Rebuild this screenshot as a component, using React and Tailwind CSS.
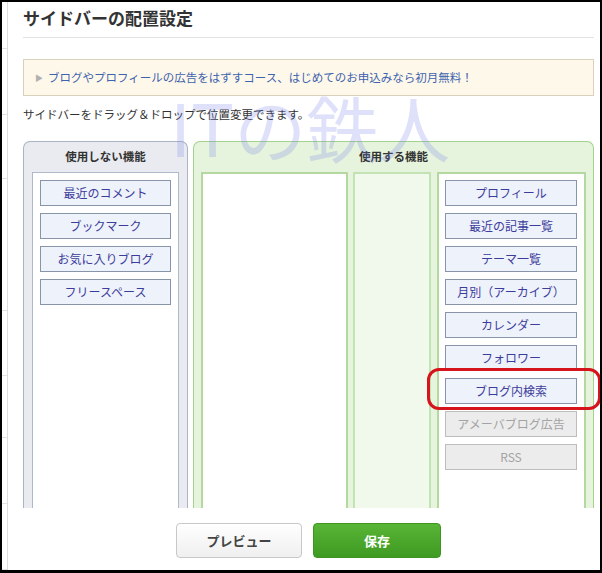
import React from "react";

const JP = { fontFamily: '"Noto Sans CJK JP", "Noto Sans", sans-serif' };

function Item({ label, disabled }) {
  return (
    <div
      className={`h-[26px] flex items-center justify-center border text-[12px] ${
        disabled
          ? "bg-[#ececec] border-[#bdbdbd] text-[#a3a3a3]"
          : "bg-[#eef2fa] border-[#8894a8] text-[#3c3c9c]"
      }`}
    >
      {label}
    </div>
  );
}

function App() {
  const unused = ["最近のコメント", "ブックマーク", "お気に入りブログ", "フリースペース"];
  const used = [
    "プロフィール",
    "最近の記事一覧",
    "テーマ一覧",
    "月別（アーカイブ）",
    "カレンダー",
    "フォロワー",
    "ブログ内検索",
  ];
  const stripLines = [53, 73, 72, 148, 72, 69, 74, 74];

  return (
    <div
      className="relative w-[602px] h-[573px] bg-white border-t-2 border-x-2 border-b-[3px] border-black flex overflow-hidden"
      style={JP}
    >
      {/* page behind the modal */}
      <div className="w-[6px] shrink-0 border-r border-[#dedede] flex flex-col">
        {stripLines.map((h, i) => (
          <div key={i} className="border-b border-[#e2e2e2]" style={{ height: h }} />
        ))}
      </div>

      {/* modal */}
      <div className="flex-1 pl-[15px] pr-[6px] flex flex-col">
        <div className="pt-[4px] pb-[7px] leading-[24px] text-[17px] font-bold text-[#333] border-b border-[#e3e3e3]">
          サイドバーの配置設定
        </div>

        <div className="mt-[21px] h-[37px] flex items-center pl-[11px] bg-[#fdf8ea] border border-[#d9d1bc] text-[11.5px] text-[#3e62ad]">
          <span className="text-[8px] text-[#b0b0b0] mr-[5px]">▶</span>
          ブログやプロフィールの広告をはずすコース、はじめてのお申込みなら初月無料！
        </div>

        <div className="mt-[9px] leading-[18px] text-[11.5px] text-[#333]">
          サイドバーをドラッグ＆ドロップで位置変更できます。
        </div>

        <div className="mt-[18px] h-[367px] flex gap-[5px] overflow-hidden">
          {/* unused */}
          <div className="w-[165px] flex flex-col bg-[#e9ebf0] border border-b-0 border-[#aab4c4] rounded-t-[7px] px-[8px]">
            <div className="h-[30px] flex items-center justify-center text-[11.5px] font-bold text-[#333]">
              使用しない機能
            </div>
            <div className="flex-1 bg-white border border-b-0 border-[#aebacb] px-[7px] pt-[7px] flex flex-col gap-[7px]">
              {unused.map((l) => (
                <Item key={l} label={l} />
              ))}
            </div>
          </div>

          {/* used */}
          <div className="flex-1 flex flex-col bg-[#e6f4de] border border-b-0 border-[#a4d18e] rounded-t-[7px] px-[7px]">
            <div className="h-[30px] flex items-center justify-center text-[11.5px] font-bold text-[#333]">
              使用する機能
            </div>
            <div className="flex-1 flex">
              <div className="w-[147px] bg-white border-2 border-b-0 border-[#b3d9a1]" />
              <div className="w-[78px] ml-[5px] bg-[#f1f9ed] border-2 border-b-0 border-[#c4e3b5]" />
              <div className="flex-1 ml-[6px] bg-white border-2 border-b-0 border-[#b3d9a1] pl-[6px] pr-[7px] pt-[6px] flex flex-col gap-[7px]">
                {used.map((l) => (
                  <Item key={l} label={l} />
                ))}
                <Item label="アメーバブログ広告" disabled />
                <Item label="RSS" disabled />
              </div>
            </div>
          </div>
        </div>

        <div className="mt-[15px] flex justify-center gap-[11px]">
          <button className="w-[126px] h-[35px] rounded-[4px] border border-[#c8c8c8] bg-gradient-to-b from-white to-[#efefef] text-[13px] font-bold text-[#444]">
            プレビュー
          </button>
          <button className="w-[128px] h-[35px] rounded-[4px] border border-[#3d9421] bg-gradient-to-b from-[#58b536] to-[#3f9a22] text-[13px] font-bold text-white">
            保存
          </button>
        </div>
      </div>

      {/* watermark */}
      <div className="absolute left-[168px] top-[74px] text-[72px] leading-[100px] text-[rgba(118,130,232,0.24)] pointer-events-none select-none">
        ITの鉄人
      </div>

      {/* red highlight */}
      <div className="absolute left-[425px] top-[366px] w-[174px] h-[42px] border-[3px] border-[#d6141c] rounded-[12px] pointer-events-none" />
    </div>
  );
}

export default App;
